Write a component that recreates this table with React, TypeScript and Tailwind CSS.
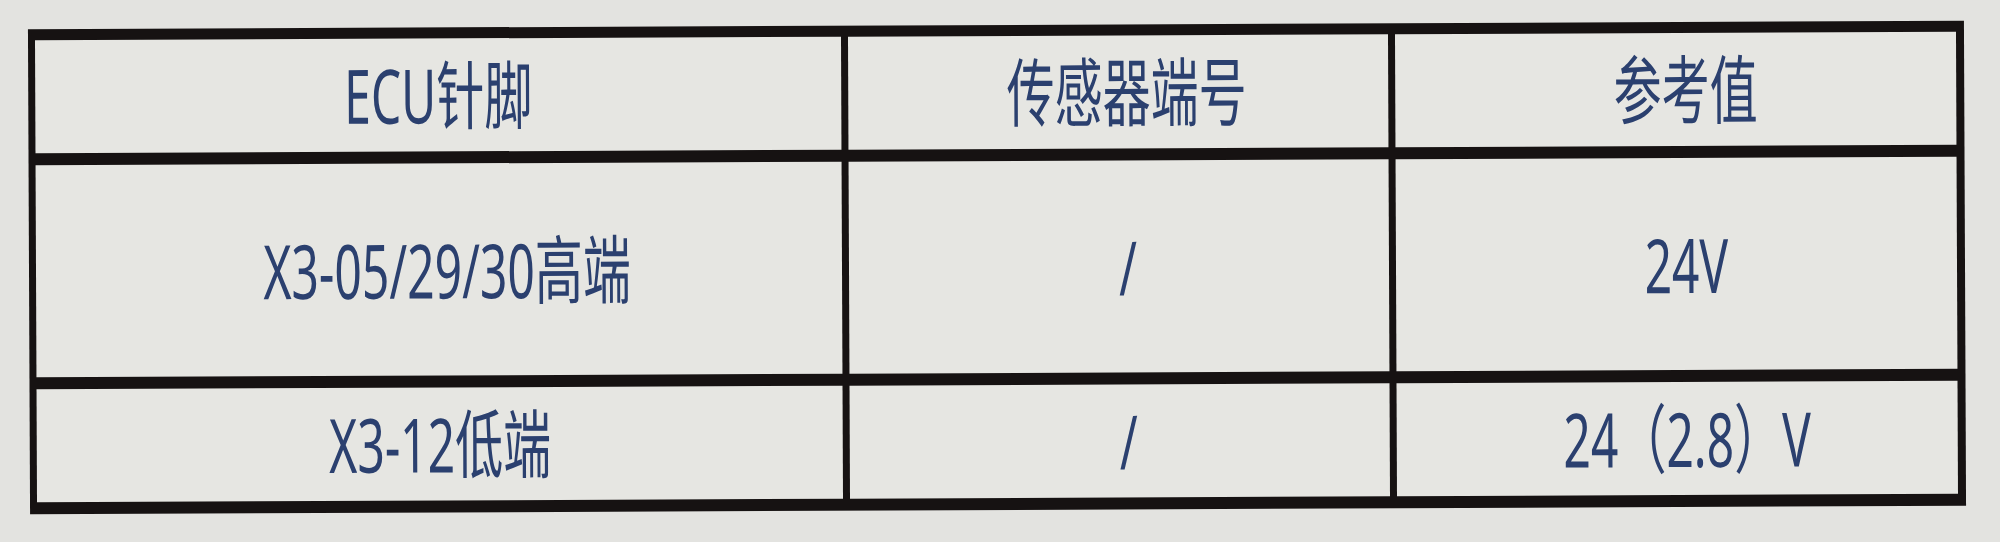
import React from "react";

function Cell({ children, pad = "" }: { children: React.ReactNode; pad?: string }) {
  return (
    <div className={`flex items-center justify-center bg-[#e6e6e2] ${pad}`}>
      <span className="inline-block scale-x-[0.64] whitespace-nowrap text-[75px] font-normal leading-none text-[#2b406f]">
        {children}
      </span>
    </div>
  );
}

export default function App() {
  return (
    <div className="h-[542px] w-[2000px] overflow-hidden bg-[#e3e3e0] pl-[29px] pt-[25px] font-['Noto_Sans','Noto_Sans_CJK_SC',sans-serif]">
      <div className="grid w-fit rotate-[-0.25deg] grid-cols-[806px_540px_561px] grid-rows-[113px_212px_113px] gap-x-[7px] gap-y-[12px] bg-[#161212] pb-[12px] pl-[7px] pr-[8px] pt-[11px]">
        <Cell>ECU针脚</Cell>
        <Cell pad="pl-[18px]">传感器端号</Cell>
        <Cell pad="pl-[20px]">参考值</Cell>

        <Cell pad="pl-[16px]">X3-05/29/30高端</Cell>
        <Cell pad="pl-[18px]">/</Cell>
        <Cell pad="pl-[20px]">24V</Cell>

        <Cell>X3-12低端</Cell>
        <Cell pad="pl-[18px]">/</Cell>
        <Cell pad="pl-[20px]">24（2.8）V</Cell>
      </div>
    </div>
  );
}
